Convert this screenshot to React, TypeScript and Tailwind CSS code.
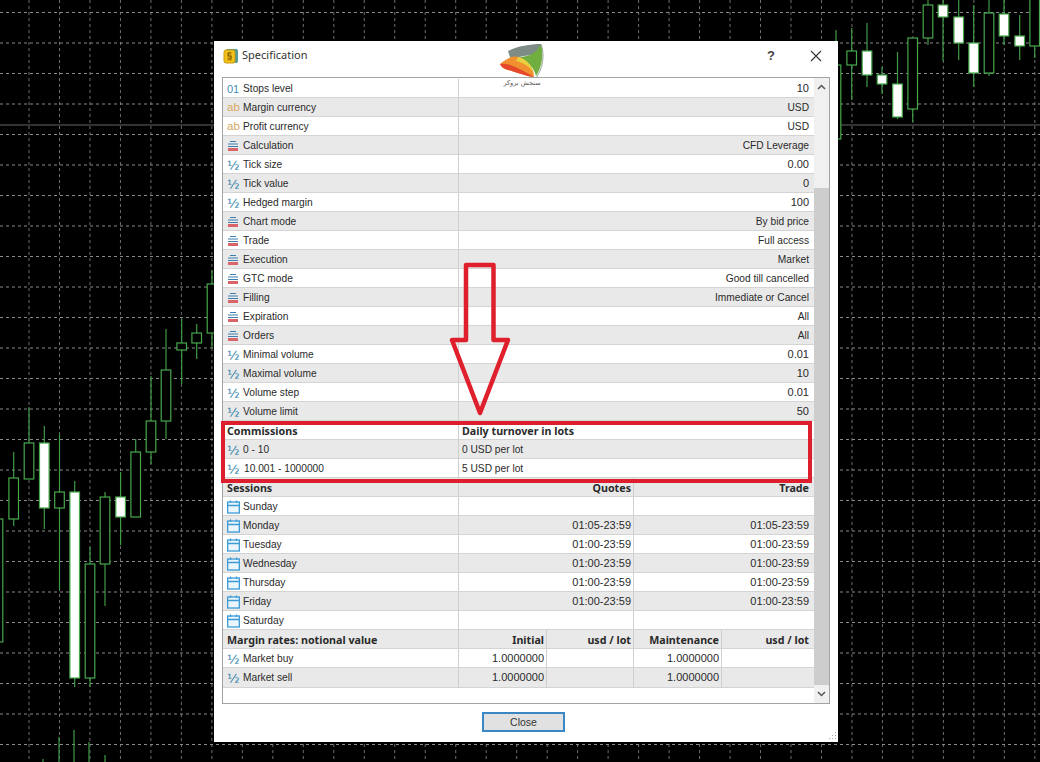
import React from "react";

// ─── Chart data ────────────────────────────────────────────────
// x, wick top, wick bottom, body top, body bottom, filled
type Candle = [number, number, number, number, number, boolean];

const candles: Candle[] = [
  [-2, 519, 642, 519, 642, false],
  [13.7, 452, 526, 478, 519, false],
  [29, 407, 479, 443, 479, false],
  [44.3, 426, 529, 443, 508, true],
  [59.5, 434, 590, 492, 508, false],
  [74.7, 481, 687, 492, 678, true],
  [90, 547, 687, 564, 678, false],
  [105, 492, 606, 497, 564, false],
  [120.6, 472, 545, 497, 517, true],
  [135.7, 439, 517, 452, 517, false],
  [151, 376, 464, 421, 452, false],
  [166, 329, 439, 370, 421, false],
  [181.7, 319, 384, 343, 350, false],
  [196.7, 324, 359, 333, 343, false],
  [212, 270, 348, 284, 333, false],
  [836, 30, 150, 65, 139, false],
  [851.7, 28, 100, 51, 65, false],
  [867, 23, 87, 51, 75, true],
  [882, 67, 94, 75, 84, true],
  [897.5, 52, 119, 84, 117, true],
  [912.7, 38, 122, 38, 109, false],
  [928, 0, 45, 5, 38, false],
  [943, 0, 61, 5, 17, true],
  [958.7, 0, 60, 17, 43, true],
  [973.7, 5, 87, 43, 73, true],
  [989, 0, 76, 13, 73, false],
  [1004, 0, 45, 14, 36, true],
  [1019.7, 15, 60, 36, 46, true],
  [1034.7, 0, 58, -2, 46, false],
];

const lowerWicks: [number, number][] = [
  [43, 759],
  [59, 737],
  [74, 730],
  [89, 742],
  [105, 755],
];

const gridX = Array.from({ length: 34 }, (_, i) => 29 + i * 30.48);
const gridY = Array.from({ length: 25 }, (_, i) => 12.5 + i * 30.5);

const Chart = () => (
  <svg width="1040" height="762" viewBox="0 0 1040 762" className="absolute inset-0">
    {gridX.map((x) => (
      <line key={x} x1={x} x2={x} y1="0" y2="762" stroke="#6e6e6e" strokeDasharray="3 3" />
    ))}
    {gridY.map((y) => (
      <line key={y} x1="0" x2="1040" y1={y} y2={y} stroke="#8a8a8a" strokeDasharray="3 3" />
    ))}
    <line x1="0" x2="1040" y1="125" y2="125" stroke="#666666" />
    {candles.map(([x, wt, wb, bt, bb, filled]) => (
      <g key={x}>
        <line x1={x} x2={x} y1={wt} y2={wb} stroke="#3f9a44" strokeWidth="1.2" />
        <rect
          x={x - 4.8}
          y={bt}
          width="9.6"
          height={bb - bt}
          fill={filled ? "#ffffff" : "#000000"}
          stroke="#47a84c"
          strokeWidth="1.2"
        />
      </g>
    ))}
    {lowerWicks.map(([x, y]) => (
      <line key={x} x1={x} x2={x} y1={y} y2="762" stroke="#3f9a44" strokeWidth="1.2" />
    ))}
  </svg>
);

// ─── Row icons ─────────────────────────────────────────────────
type IconKind = "int" | "str" | "enum" | "num" | "cal";

const RowIcon = ({ kind }: { kind: IconKind }) => {
  if (kind === "int")
    return <span className="w-[16px] text-[11px] text-[#3f8db8]">01</span>;
  if (kind === "str")
    return <span className="w-[16px] text-[11.5px] text-[#d6a85c]">ab</span>;
  if (kind === "num")
    return (
      <span className="w-[16px] font-['DejaVu_Sans',sans-serif] text-[13px] text-[#2f7fa8]">½</span>
    );
  if (kind === "enum")
    return (
      <svg width="12" height="12" viewBox="0 0 12 12" className="mr-[4px]">
        <path d="M3 1.5h6M1 4h10M1 6.5h10" stroke="#3f7fb0" strokeWidth="1.2" fill="none" />
        <rect x="1" y="8" width="10" height="3" fill="#d9646a" />
      </svg>
    );
  return (
    <svg width="13" height="14" viewBox="0 0 13 14" className="mr-[3px]">
      <rect x="0.65" y="2" width="11.7" height="11" fill="#eaf5fc" stroke="#3d9bd6" strokeWidth="1.3" />
      <path d="M1 5.5h11" stroke="#3d9bd6" strokeWidth="1.5" />
      <path d="M3.5 0.5v2.5M9.5 0.5v2.5" stroke="#3d9bd6" strokeWidth="1.3" />
    </svg>
  );
};

// ─── Table rows ────────────────────────────────────────────────
const rowClass = (i: number) =>
  i % 2 === 1 ? "bg-[#e9e9e9]" : "bg-white";

const BOLD = "pt-[2px] font-['Noto_Sans',sans-serif] text-[10.7px] font-bold";

// digits run wider than letters in the original font
const valueClass = (v: string) => (/^[\d.:\- ]+$/.test(v) ? "text-[11px]" : "pt-[2px]");

const Cell = ({
  className,
  children,
  bold,
}: {
  className: string;
  children?: string;
  bold?: boolean;
}) => (
  <div
    className={`flex h-full items-center justify-end border-r border-[#cfcfcf] pr-[2px] ${
      bold ? BOLD : valueClass(children ?? "")
    } ${className}`}
  >
    {children}
  </div>
);

const Label = ({ icon, text, bold, indent }: { icon?: IconKind; text: string; bold?: boolean; indent?: boolean }) => (
  <div
    className={`flex h-full w-[236px] shrink-0 items-center border-r border-[#cfcfcf] pl-[4px] ${
      bold ? BOLD : "pt-[2px]"
    }`}
  >
    {icon && <RowIcon kind={icon} />}
    <span className={indent ? "ml-[1px]" : ""}>{text}</span>
  </div>
);

const KeyValue = ({ i, icon, label, value }: { i: number; icon: IconKind; label: string; value: string }) => (
  <div className={`flex h-[19.03px] items-center border-b border-[#d4d4d4] ${rowClass(i)}`}>
    <Label icon={icon} text={label} />
    <div className={`flex-1 pr-[5px] text-right ${valueClass(value)}`}>{value}</div>
  </div>
);

const specs: [IconKind, string, string][] = [
  ["int", "Stops level", "10"],
  ["str", "Margin currency", "USD"],
  ["str", "Profit currency", "USD"],
  ["enum", "Calculation", "CFD Leverage"],
  ["num", "Tick size", "0.00"],
  ["num", "Tick value", "0"],
  ["num", "Hedged margin", "100"],
  ["enum", "Chart mode", "By bid price"],
  ["enum", "Trade", "Full access"],
  ["enum", "Execution", "Market"],
  ["enum", "GTC mode", "Good till cancelled"],
  ["enum", "Filling", "Immediate or Cancel"],
  ["enum", "Expiration", "All"],
  ["enum", "Orders", "All"],
  ["num", "Minimal volume", "0.01"],
  ["num", "Maximal volume", "10"],
  ["num", "Volume step", "0.01"],
  ["num", "Volume limit", "50"],
];

const commissions = [
  { range: "0 - 10", fee: "0 USD per lot", i: 19, indent: false },
  { range: "10.001 - 1000000", fee: "5 USD per lot", i: 20, indent: true },
];

const sessions: [string, string, string][] = [
  ["Sunday", "", ""],
  ["Monday", "01:05-23:59", "01:05-23:59"],
  ["Tuesday", "01:00-23:59", "01:00-23:59"],
  ["Wednesday", "01:00-23:59", "01:00-23:59"],
  ["Thursday", "01:00-23:59", "01:00-23:59"],
  ["Friday", "01:00-23:59", "01:00-23:59"],
  ["Saturday", "", ""],
];

const SessionRow = ({ i, a, b, c, bold, icon }: { i: number; a: string; b: string; c: string; bold?: boolean; icon?: IconKind }) => (
  <div className={`flex h-[19.03px] items-center border-b border-[#d4d4d4] ${rowClass(i)}`}>
    <Label icon={icon} text={a} bold={bold} />
    <Cell className="w-[175px]" bold={bold}>{b}</Cell>
    <div className={`flex-1 pr-[5px] text-right ${bold ? BOLD : valueClass(c)}`}>{c}</div>
  </div>
);

const MarginRow = ({ i, cols, bold, icon }: { i: number; cols: string[]; bold?: boolean; icon?: IconKind }) => (
  <div className={`flex h-[19.03px] items-center border-b border-[#d4d4d4] ${rowClass(i)}`}>
    <Label icon={icon} text={cols[0]} bold={bold} />
    <Cell className="w-[88px]" bold={bold}>{cols[1]}</Cell>
    <Cell className="w-[87px]" bold={bold}>{cols[2]}</Cell>
    <Cell className="w-[88px]" bold={bold}>{cols[3]}</Cell>
    <div className={`flex-1 pr-[5px] text-right ${bold ? BOLD : ""}`}>{cols[4]}</div>
  </div>
);

// ─── Overlays ──────────────────────────────────────────────────
const Logo = () => (
  <div className="absolute left-[283px] top-[2px] flex w-[50px] flex-col items-center">
    <svg width="44" height="36" viewBox="0 0 44 36">
      <path d="M8 8C18 3 30 1 41 1 40 8 36 12 30 12 24 13 16 14 11 17Z" fill="#7d8c84" />
      <path d="M41 1C44 12 42 24 36 33 34 25 28 18 18 14 26 14 36 12 41 1Z" fill="#6fae3f" />
      <path d="M0 21C5 18 10 12 18 14 26 16 34 24 34 34 24 33 14 28 8 27 4 26 1 24 0 21Z" fill="#f09030" />
      <path d="M0 21C6 20 14 22 34 34 24 33 14 28 8 27 4 26 1 24 0 21Z" fill="#e5482a" />
      <path d="M18 14C26 16 30 20 34 30 30 24 24 20 16 18Z" fill="#e9cf40" />
      <path d="M41 1C45 12 43 25 36 35" stroke="#9aa5a0" fill="none" />
    </svg>
    <span dir="rtl" className="font-['DejaVu_Sans',sans-serif] text-[6.5px] leading-[8px] text-[#555555]">
      سنجش بروکر
    </span>
  </div>
);

const DownArrow = () => (
  <svg width="70" height="165" viewBox="0 0 70 165" className="absolute left-[231px] top-[220px]">
    <path
      d="M21 4H48.5V79H63L35 152 7 79H21Z"
      fill="none"
      stroke="#e01f2d"
      strokeWidth="4.5"
      strokeLinejoin="round"
    />
  </svg>
);

const AppIcon = () => (
  <svg width="16" height="16" viewBox="0 0 16 16" className="shrink-0">
    <rect x="3" y="1" width="12" height="14" rx="2" fill="#4d9a96" />
    <rect x="1" y="2" width="11" height="13" rx="2" fill="#f2c21a" stroke="#c99a10" />
    <rect x="4" y="4" width="5" height="9" fill="#e0a80f" />
    <path d="M8 5H5.2v3H8v3H5" stroke="#6b5200" fill="none" />
  </svg>
);

export default function App() {
  return (
    <div className="relative h-[762px] w-[1040px] overflow-hidden bg-black font-['Liberation_Sans',sans-serif]">
      <Chart />

      {/* Specification dialog */}
      <div className="absolute left-[214px] top-[41px] flex h-[701px] w-[624px] flex-col bg-white text-[#2a2a2a]">
        <div className="flex h-[36px] shrink-0 items-center pb-[7px] pl-[9px]">
          <AppIcon />
          <span className="ml-[3px] font-['Noto_Sans',sans-serif] text-[11px] text-[#333333]">Specification</span>
          <span className="ml-auto mr-[35px] text-[13px] font-bold text-[#444444]">?</span>
          <svg width="12" height="12" viewBox="0 0 12 12" className="mr-[16px]">
            <path d="M1 1l10 10M11 1L1 11" stroke="#333333" strokeWidth="1.1" />
          </svg>
        </div>

        <div className="mx-[8px] flex h-[627px] shrink-0 border border-[#a3a3a3] text-[10.2px] leading-none">
          <div className="w-[591px] shrink-0 pt-[1px]">
            {specs.map(([icon, label, value], i) => (
              <KeyValue key={label} i={i} icon={icon} label={label} value={value} />
            ))}

            <div className="flex h-[19.03px] items-center border-b border-[#d4d4d4] bg-white">
              <Label text="Commissions" bold />
              <div className={`flex-1 pl-[3px] ${BOLD}`}>Daily turnover in lots</div>
            </div>
            {commissions.map((c) => (
              <div key={c.range} className={`flex h-[19.03px] items-center border-b border-[#d4d4d4] ${rowClass(c.i)}`}>
                <Label icon="num" text={c.range} indent={c.indent} />
                <div className="flex-1 pl-[3px] pt-[2px]">{c.fee}</div>
              </div>
            ))}

            <SessionRow i={21} a="Sessions" b="Quotes" c="Trade" bold />
            {sessions.map(([day, quotes, trade], i) => (
              <SessionRow key={day} i={22 + i} a={day} b={quotes} c={trade} icon="cal" />
            ))}

            <MarginRow i={29} bold cols={["Margin rates: notional value", "Initial", "usd / lot", "Maintenance", "usd / lot"]} />
            <MarginRow i={30} icon="num" cols={["Market buy", "1.0000000", "", "1.0000000", ""]} />
            <MarginRow i={31} icon="num" cols={["Market sell", "1.0000000", "", "1.0000000", ""]} />
          </div>

          {/* Scrollbar */}
          <div className="flex w-[15px] shrink-0 flex-col bg-[#f0f0f0]">
            <div className="flex h-[17px] items-center justify-center">
              <svg width="9" height="6" viewBox="0 0 9 6">
                <path d="M1 5l3.5-3.5L8 5" stroke="#555555" strokeWidth="1.5" fill="none" />
              </svg>
            </div>
            <div className="mt-[93px] h-[497px] bg-[#cdcdcd]" />
            <div className="flex flex-1 items-center justify-center">
              <svg width="9" height="6" viewBox="0 0 9 6">
                <path d="M1 1l3.5 3.5L8 1" stroke="#555555" strokeWidth="1.5" fill="none" />
              </svg>
            </div>
          </div>
        </div>

        <div className="flex flex-1 items-start justify-start pl-[268px] pt-[8px]">
          <button className="h-[20px] w-[83px] border-2 border-[#3a87c4] bg-[#e1e1e1] text-[10.5px] leading-none text-[#333333]">
            Close
          </button>
        </div>

        {/* Resize grip */}
        <svg width="10" height="10" viewBox="0 0 10 10" className="absolute bottom-[1px] right-[1px]">
          <path d="M8 1h1v1H8zM5 4h1v1H5zM8 4h1v1H8zM2 7h1v1H2zM5 7h1v1H5zM8 7h1v1H8z" fill="#a8a8a8" />
        </svg>

        <Logo />
        <DownArrow />

        {/* Red highlight over the commissions block */}
        <div className="absolute left-[7px] top-[380px] h-[62px] w-[591px] border-[4.5px] border-[#dd1f2d]" />
      </div>
    </div>
  );
}
